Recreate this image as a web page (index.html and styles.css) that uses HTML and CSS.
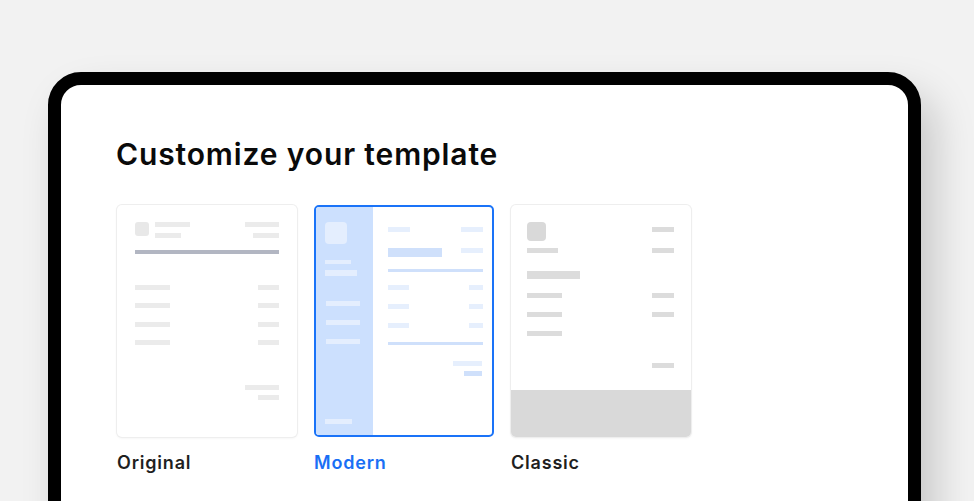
FILE: index.html
```html
<!DOCTYPE html>
<html>
<head>
<meta charset="utf-8">
<link rel="stylesheet" href="styles.css">
</head>
<body>
<div class="device">
  <div class="content">
    <h1 class="title">Customize your template</h1>
    <div class="templates">
      <div class="option">
        <div class="card">
          <svg class="thumb" width="180" height="232" viewBox="0 0 180 232">
            <g fill="#ebebeb">
              <rect x="18" y="17" width="14" height="14" rx="3" fill="#e8e8e8"/>
              <rect x="38" y="17" width="35" height="5"/>
              <rect x="38" y="28" width="26" height="5"/>
              <rect x="128" y="17" width="34" height="5"/>
              <rect x="136" y="28" width="26" height="5"/>
              <rect x="18" y="45" width="144" height="4" fill="#b2b6c2"/>
              <rect x="18" y="80" width="35" height="5"/>
              <rect x="141" y="80" width="21" height="5"/>
              <rect x="18" y="98" width="35" height="5"/>
              <rect x="141" y="98" width="21" height="5"/>
              <rect x="18" y="117" width="35" height="5"/>
              <rect x="141" y="117" width="21" height="5"/>
              <rect x="18" y="135" width="35" height="5"/>
              <rect x="141" y="135" width="21" height="5"/>
              <rect x="128" y="180" width="34" height="5"/>
              <rect x="141" y="190" width="21" height="5"/>
            </g>
          </svg>
        </div>
        <div class="label">Original</div>
      </div>
      <div class="option selected">
        <div class="card">
          <svg class="thumb" width="176" height="228" viewBox="0 0 176 228">
            <rect x="0" y="0" width="57" height="228" fill="#cce0fe"/>
            <g fill="#e4eefe">
              <rect x="9" y="15" width="22" height="22" rx="4"/>
              <rect x="9" y="53" width="26" height="4"/>
              <rect x="9" y="63" width="32" height="6"/>
              <rect x="10" y="94" width="34" height="5"/>
              <rect x="10" y="113" width="34" height="5"/>
              <rect x="10" y="132" width="34" height="5"/>
              <rect x="9" y="212" width="27" height="5"/>
            </g>
            <g fill="#e6effd">
              <rect x="72" y="20" width="22" height="5"/>
              <rect x="145" y="20" width="22" height="5"/>
              <rect x="145" y="41" width="22" height="5"/>
              <rect x="72" y="78" width="21" height="5"/>
              <rect x="153" y="78" width="14" height="5"/>
              <rect x="72" y="97" width="21" height="5"/>
              <rect x="153" y="97" width="14" height="5"/>
              <rect x="72" y="116" width="21" height="5"/>
              <rect x="153" y="116" width="14" height="5"/>
              <rect x="137" y="154" width="29" height="5"/>
            </g>
            <g fill="#cfe0fb">
              <rect x="72" y="41" width="54" height="9"/>
              <rect x="72" y="62" width="95" height="3"/>
              <rect x="72" y="135" width="95" height="3"/>
              <rect x="148" y="164" width="18" height="5"/>
            </g>
          </svg>
        </div>
        <div class="label">Modern</div>
      </div>
      <div class="option">
        <div class="card">
          <svg class="thumb" width="180" height="232" viewBox="0 0 180 232">
            <g fill="#dcdcdc">
              <rect x="16" y="17" width="19" height="19" rx="4" fill="#d9d9d9"/>
              <rect x="141" y="22" width="22" height="5"/>
              <rect x="16" y="43" width="31" height="5"/>
              <rect x="141" y="43" width="22" height="5"/>
              <rect x="16" y="66" width="53" height="8"/>
              <rect x="16" y="88" width="35" height="5"/>
              <rect x="141" y="88" width="22" height="5"/>
              <rect x="16" y="107" width="35" height="5"/>
              <rect x="141" y="107" width="22" height="5"/>
              <rect x="16" y="126" width="35" height="5"/>
              <rect x="141" y="158" width="22" height="5"/>
              <rect x="0" y="185" width="180" height="47" fill="#d9d9d9"/>
            </g>
          </svg>
        </div>
        <div class="label">Classic</div>
      </div>
    </div>
  </div>
</div>
</body>
</html>
```

FILE: styles.css
```css
html, body {
  margin: 0;
  padding: 0;
  height: 501px;
  overflow: hidden;
  background: #f2f2f2;
}

body {
  font-family: Inter, "Noto Sans", "Liberation Sans", sans-serif;
  -webkit-font-smoothing: antialiased;
}

.device {
  box-sizing: border-box;
  margin: 72px 0 0 48px;
  width: 873px;
  height: 620px;
  border: 13px solid #000;
  border-radius: 33px;
  background: #fff;
  box-shadow: 14px 22px 40px rgba(0, 0, 0, 0.18);
}

.content {
  padding: 51px 0 0 56px;
}

.title {
  margin: 0 0 33px -1px;
  font-size: 30px;
  line-height: 36px;
  font-weight: 600;
  color: #0a0a0a;
  letter-spacing: 0.87px;
}

.templates {
  display: flex;
  gap: 17px;
}

.option {
  display: flex;
  flex-direction: column;
}

.card {
  box-sizing: border-box;
  width: 180px;
  height: 232px;
  border-radius: 5px;
  overflow: hidden;
  background: #fff;
  box-shadow: 0 0 0 1px #eeeeee, 0 1px 3px rgba(0, 0, 0, 0.07);
}

.thumb {
  display: block;
}

.selected .card {
  border: 2px solid #1a73f8;
  box-shadow: none;
}

.label {
  margin-top: 15px;
  font-size: 18px;
  line-height: 22px;
  font-weight: 600;
  color: #1f1f1f;
  letter-spacing: 0.8px;
}

.selected .label {
  color: #1a6ff5;
}
```
